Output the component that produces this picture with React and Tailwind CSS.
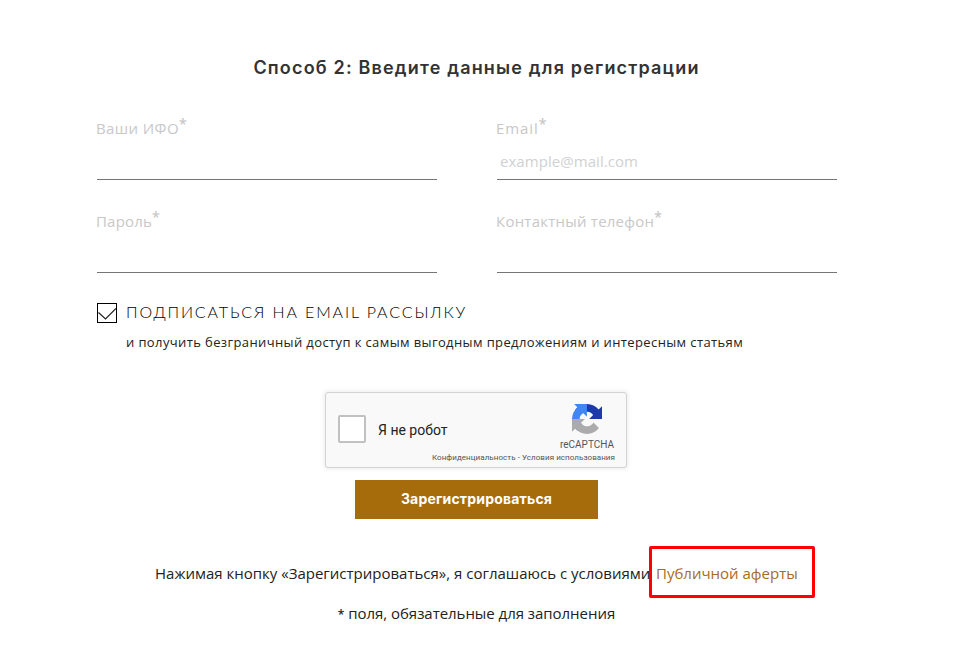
function Field({ label, spacing, type = 'text', placeholder }) {
  return (
    <div className="h-[93px]">
      <label className="-ml-px flex h-7 items-start text-[15px] leading-[24px] text-[#c8c8c8]">
        <span className={spacing}>{label}</span>
        <span className="text-[14px] leading-[15px] font-semibold">*</span>
      </label>
      <input
        type={type}
        placeholder={placeholder}
        className="block h-9 w-full border-b border-[#757575] bg-transparent pb-[2px] pl-[3px] text-[15px] tracking-[0.05px] outline-none placeholder:text-[#cfd1d4]"
      />
    </div>
  );
}

function CaptchaLogo() {
  return (
    <svg width="30" height="30" viewBox="0 0 64 64" className="block">
      <path fill="#1c3aa9" d="M64 31.955l-.033-1.37V4.687l-7.16 7.16C50.948 4.674 42.033.093 32.05.093c-10.4 0-19.622 4.96-25.458 12.64l11.736 11.86a15.55 15.55 0 0 1 4.754-5.334c2.05-1.6 4.952-2.906 8.968-2.906.485 0 .86.057 1.135.163 4.976.393 9.288 3.14 11.828 7.124l-8.307 8.307L64 31.953" />
      <path fill="#4285f4" d="M31.862.094l-1.37.033H4.594l7.16 7.16C4.58 13.147 0 22.06 0 32.046c0 10.4 4.96 19.622 12.64 25.458L24.5 45.768a15.55 15.55 0 0 1-5.334-4.754c-1.6-2.05-2.906-4.952-2.906-8.968 0-.485.057-.86.163-1.135.393-4.976 3.14-9.288 7.124-11.828l8.307 8.307L31.86.095" />
      <path fill="#ababab" d="M.001 32.045l.033 1.37v25.898l7.16-7.16c5.86 7.173 14.774 11.754 24.76 11.754 10.4 0 19.622-4.96 25.458-12.64l-11.736-11.86a15.55 15.55 0 0 1-4.754 5.334c-2.05 1.6-4.952 2.906-8.968 2.906-.485 0-.86-.057-1.135-.163-4.976-.393-9.288-3.14-11.828-7.124l8.307-8.307c-10.522.04-22.4.066-27.295-.005" />
    </svg>
  );
}

export default function App() {
  return (
    <main className="h-[669px] w-[963px] overflow-hidden bg-white font-['Open_Sans','Noto_Sans',sans-serif] text-[#222222]">
      <form className="flex w-[953px] flex-col">
        <h1 className="mt-[56px] text-center font-['Inter',sans-serif] text-[18px] leading-[24px] font-semibold tracking-[1.17px] text-[#333333]">
          Способ 2: Введите данные для регистрации
        </h1>

        <div className="mt-[36px] ml-[97px] grid grid-cols-[340px_340px] gap-x-[60px]">
          <Field label="Ваши ИФО" spacing="tracking-[0.4px]" />
          <Field label="Email" spacing="tracking-[0.9px]" type="email" placeholder="example@mail.com" />
          <Field label="Пароль" spacing="tracking-[0.2px]" type="password" />
          <Field label="Контактный телефон" spacing="tracking-[0.23px]" type="tel" />
        </div>

        <div className="mt-px ml-[97px] flex gap-[9px]">
          <span className="h-5 w-5 border border-black">
            <svg width="18" height="18" viewBox="0 0 18 18" fill="none" className="block">
              <path d="M0.500 8.500L7.500 15L18 4.500" stroke="#222" strokeWidth="1.200" />
            </svg>
          </span>
          <div className="whitespace-nowrap">
            <p className="font-['Lato',sans-serif] text-[16px] leading-[18px] font-light tracking-[1.88px] text-black">
              ПОДПИСАТЬСЯ НА EMAIL РАССЫЛКУ
            </p>
            <p className="mt-[11px] text-[13px] leading-[20px] tracking-[0.385px]">
              и получить безграничный доступ к самым выгодным предложениям и интересным статьям
            </p>
          </div>
        </div>

        <div className="mt-[40px] ml-[325px] flex h-[76px] w-[302px] justify-between rounded-[3px] border border-[#d3d3d3] bg-[#f9f9f9] pl-3 font-['Roboto',sans-serif] shadow-[0_0_4px_1px_rgba(0,0,0,0.08)]">
          <div className="flex h-[74px] shrink-0 items-center gap-3">
            <span className="mb-0.5 h-7 w-7 rounded-[2px] border-2 border-[#c1c1c1] bg-white" />
            <span className="text-[14px] whitespace-nowrap text-[#222222]">Я не робот</span>
          </div>
          <div className="flex w-0 flex-col items-end pt-[11px] pr-3 whitespace-nowrap text-[#555555]">
            <span className="mr-[12px]">
              <CaptchaLogo />
            </span>
            <span className="mt-[4px] text-[10px] leading-[13px]">reCAPTCHA</span>
            <span className="-mr-px text-[8px] leading-[13px] tracking-[0.06px]">
              Конфиденциальность - Условия использования
            </span>
          </div>
        </div>

        <button
          type="button"
          className="mt-3 ml-[355px] h-[39px] w-[243px] bg-[#a66c0c] pb-[2px] font-['Inter',sans-serif] text-[14px] font-bold tracking-[0.18px] text-white"
        >
          Зарегистрироваться
        </button>

        <div className="mt-[27px] ml-[155px] flex h-[52px] items-center text-[15px] whitespace-nowrap">
          <span className="w-[494px] pt-[2px]">
            Нажимая кнопку «Зарегистрироваться», я соглашаюсь с условиями
          </span>
          <a className="flex h-[52px] w-[166px] items-center rounded-[2px] border-3 border-[#fe0000] bg-white pt-[2px] pl-[4px] text-[#a66c24]">
            Публичной аферты
          </a>
        </div>

        <p className="mt-[4px] text-center text-[15px] leading-[22px] tracking-[-0.04px]">
          <span className="text-[12px] font-semibold">*</span> поля, обязательные для заполнения
        </p>
      </form>
    </main>
  );
}
